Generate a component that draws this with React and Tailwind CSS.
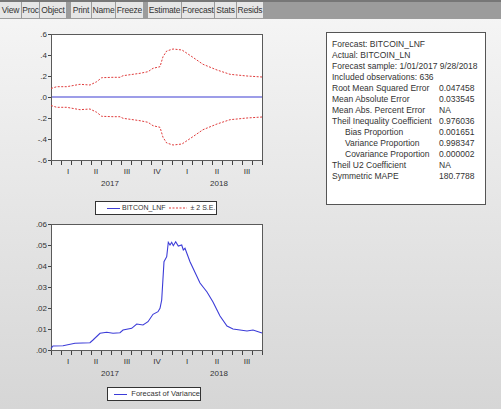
import React from 'react';

// EViews-style forecast output: toolbar, two charts and a stats box

const toolbarGroups = [
  [['View', 21], ['Proc', 17], ['Object', 26]],
  [['Print', 20], ['Name', 23], ['Freeze', 27]],
  [['Estimate', 33], ['Forecast', 32], ['Stats', 21], ['Resids', 26]],
];

const statsRows = [
  { label: 'Forecast: BITCOIN_LNF' },
  { label: 'Actual: BITCOIN_LN' },
  { label: 'Forecast sample: 1/01/2017 9/28/2018' },
  { label: 'Included observations: 636' },
  { label: 'Root Mean Squared Error', value: '0.047458' },
  { label: 'Mean Absolute Error', value: '0.033545' },
  { label: 'Mean Abs. Percent Error', value: 'NA' },
  { label: 'Theil Inequality Coefficient', value: '0.976036' },
  { label: 'Bias Proportion', value: '0.001651', indent: true },
  { label: 'Variance Proportion', value: '0.998347', indent: true },
  { label: 'Covariance Proportion', value: '0.000002', indent: true },
  { label: 'Theil U2 Coefficient', value: 'NA' },
  { label: 'Symmetric MAPE', value: '180.7788' },
];

// svg coords, plot box at x 51..262, y 8..134
const upper = [
  [51, 62.5], [56.7, 60.7], [66.7, 60.7], [80, 58.3], [90, 59], [96.7, 55.7], [101.7, 51.7],
  [113, 51.3], [120, 51.3], [123, 49.7], [133, 48.3], [140, 47.3], [148, 45.7], [153, 42.3],
  [160, 40.7], [163, 30.7], [166.7, 25], [173, 23], [182, 24], [192, 30.7], [203, 38.3],
  [217, 44], [230, 48.3], [247, 50], [262, 51],
];
const lower = upper.map(([x, y]) => [x, 142 - y]);

const variance = [
  [51, 132.5], [53, 130], [63, 129.7], [75, 127.3], [90, 126.7], [93, 124], [100, 117.3],
  [106.7, 116.3], [113, 117.3], [120, 116.7], [123, 114], [131.7, 112.3], [136.7, 108],
  [143, 109], [148, 105.7], [153, 98.3], [158, 95.7], [160, 92.3], [161.7, 84], [164, 45.7],
  [166.7, 40.7], [168.3, 26.3], [170, 29], [171.7, 26.3], [173.3, 29.7], [175.7, 25.7],
  [178.3, 30], [181.7, 29], [183.3, 34], [185, 32.3], [190, 45.7], [200, 67], [207, 76],
  [213, 86], [220, 100], [227, 110], [233, 113], [247, 115], [253, 114], [262, 117],
];

const pts = (arr) => arr.map(([x, y]) => `${x},${y}`).join(' ');

const quarters = [['I', 68], ['II', 96], ['III', 127], ['IV', 157], ['I', 187], ['II', 217], ['III', 247]];
const years = [['2017', 110], ['2018', 219]];

function Chart({ yLabels, children }) {
  const months = Array.from({ length: 22 }, (_, i) => 51 + i * (211 / 21));
  return (
    <svg width="270" height="165" className="block" style={{ fontFamily: '"Liberation Sans", Arial, sans-serif' }}>
      <rect x="51.5" y="8.5" width="211" height="126" fill="#fff" stroke="#5a5a5a" strokeWidth="1" />
      {yLabels.map((label, i) => {
        const y = 8.5 + i * 21;
        return (
          <g key={label}>
            <line x1="48" y1={y} x2="51" y2={y} stroke="#444" shapeRendering="crispEdges" />
            <text x="47" y={y} textAnchor="end" dominantBaseline="middle" fontSize="8" fill="#333">
              {label}
            </text>
          </g>
        );
      })}
      {months.map((x, i) => (
        <line
          key={i}
          x1={Math.round(x) + 0.5}
          y1="135"
          x2={Math.round(x) + 0.5}
          y2="139"
          stroke="#444"
          shapeRendering="crispEdges"
        />
      ))}
      {quarters.map(([q, x], i) => (
        <text key={i} x={x} y="146" textAnchor="middle" dominantBaseline="middle" fontSize="8" fill="#333">
          {q}
        </text>
      ))}
      {years.map(([yr, x]) => (
        <text key={yr} x={x} y="158" textAnchor="middle" dominantBaseline="middle" fontSize="8" fill="#333">
          {yr}
        </text>
      ))}
      {children}
    </svg>
  );
}

export default function App() {
  return (
    <div
      className="w-[501px] h-[409px] overflow-hidden bg-gradient-to-b from-[#f6f6f6] to-[#d6d6d6] text-[#333]"
      style={{ fontFamily: '"Liberation Sans", Arial, sans-serif' }}
    >
      {/* toolbar */}
      <div className="h-[19px] bg-[#9c9c9c] border-t-2 border-[#777] flex items-start">
        {toolbarGroups.map((group, gi) => (
          <div key={gi} className={`flex gap-px ${gi > 0 ? 'ml-[5px]' : ''}`}>
            {group.map(([name, w]) => (
              <div
                key={name}
                style={{ width: w }}
                className="h-[16px] bg-[#e6e6e6] flex items-center justify-center text-[8.5px] tracking-[-0.2px] text-[#333] whitespace-nowrap"
              >
                {name}
              </div>
            ))}
          </div>
        ))}
      </div>

      <div className="flex">
        {/* charts */}
        <div className="w-[270px] shrink-0">
          <div className="mt-[7px]">
            <Chart yLabels={['.6', '.4', '.2', '.0', '-.2', '-.4', '-.6']}>
              <line x1="52" y1="71" x2="262" y2="71" stroke="#3c3cd2" strokeWidth="1.2" />
              <polyline points={pts(upper)} fill="none" stroke="#e03c3c" strokeWidth="1" strokeDasharray="2 1.5" />
              <polyline points={pts(lower)} fill="none" stroke="#e03c3c" strokeWidth="1" strokeDasharray="2 1.5" />
            </Chart>
          </div>
          <div className="ml-[95px] mt-[10px] w-[122px] h-[14px] bg-white border border-[#333] flex items-center text-[7px] text-[#333] whitespace-nowrap">
            <span className="ml-[11px] w-[13px] h-px bg-[#3c3cd2] shrink-0" />
            <span className="ml-[2px]">BITCON_LNF</span>
            <svg width="18" height="2" className="ml-[3px] shrink-0">
              <line x1="0" y1="1" x2="18" y2="1" stroke="#e03c3c" strokeDasharray="2 1.5" />
            </svg>
            <span className="ml-[4px]">± 2 S.E.</span>
          </div>
          <div className="mt-px">
            <Chart yLabels={['.06', '.05', '.04', '.03', '.02', '.01', '.00']}>
              <polyline points={pts(variance)} fill="none" stroke="#3c3cd8" strokeWidth="1.1" />
            </Chart>
          </div>
          <div className="ml-[107px] mt-[6px] w-[94px] h-[14px] bg-white border border-[#333] flex items-center text-[7.5px] text-[#333]">
            <span className="ml-[6px] w-[14px] h-px bg-[#3c3cd8]" />
            <span className="ml-[4px] whitespace-nowrap">Forecast of Variance</span>
          </div>
        </div>

        {/* stats box */}
        <div className="ml-[56px] mt-[13px] w-[160px] h-[173px] bg-white border border-[#555] pt-[6px] pl-[5px] text-[8.5px] leading-[11px] text-[#333]">
          {statsRows.map((row) => (
            <div key={row.label} className="flex whitespace-nowrap">
              <div className={`w-[107px] shrink-0 ${row.indent ? 'pl-[13px]' : ''}`}>{row.label}</div>
              {row.value && <div>{row.value}</div>}
            </div>
          ))}
        </div>
      </div>
    </div>
  );
}
